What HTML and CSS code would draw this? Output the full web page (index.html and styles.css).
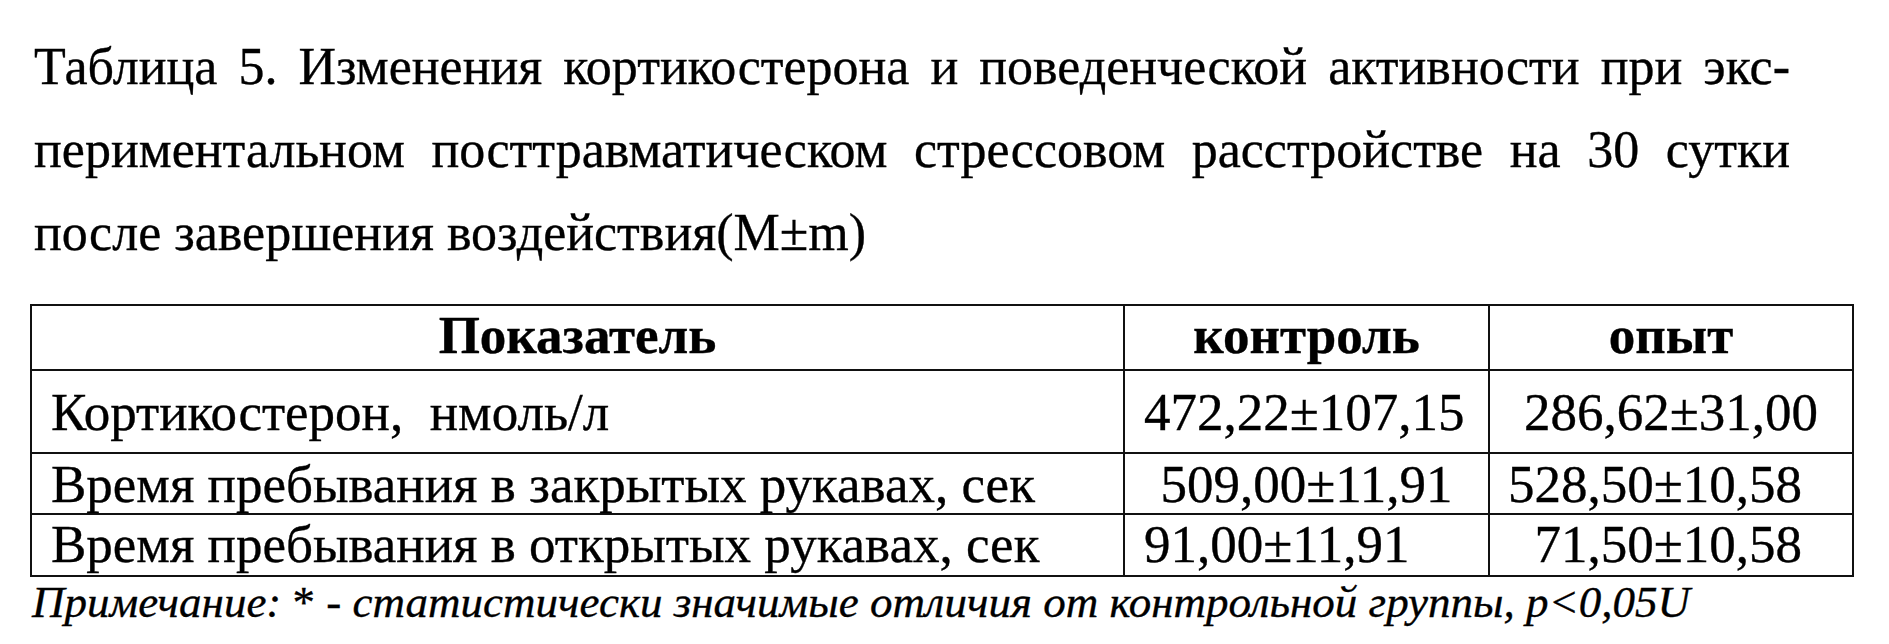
FILE: index.html
```html
<!DOCTYPE html>
<html lang="ru">
<head>
<meta charset="utf-8">
<title>Таблица 5</title>
<link rel="stylesheet" href="styles.css">
</head>
<body>
<div class="page">
  <div class="caption">
    <div class="line just">Таблица 5. Изменения кортикостерона и поведенческой активности при экс-</div>
    <div class="line just">периментальном посттравматическом стрессовом расстройстве на 30 сутки</div>
    <div class="line">после завершения воздействия(M±m)</div>
  </div>
  <table class="data">
    <colgroup>
      <col class="col-name">
      <col class="col-ctrl">
      <col class="col-exp">
    </colgroup>
    <tr class="r-head">
      <th>Показатель</th>
      <th>контроль</th>
      <th>опыт</th>
    </tr>
    <tr class="r-1">
      <td class="name">Кортикостерон,&nbsp; нмоль/л</td>
      <td class="left">472,22±107,15</td>
      <td class="center">286,62±31,00</td>
    </tr>
    <tr class="r-2">
      <td class="name">Время пребывания в закрытых рукавах, сек</td>
      <td class="center">509,00±11,91</td>
      <td class="right">528,50±10,58</td>
    </tr>
    <tr class="r-3">
      <td class="name">Время пребывания в открытых рукавах, сек</td>
      <td class="left">91,00±11,91</td>
      <td class="right">71,50±10,58</td>
    </tr>
  </table>
  <div class="note"><i>Примечание:</i> * <i>- статистически значимые отличия от контрольной группы, p&lt;0,05U</i></div>
</div>
</body>
</html>
```
FILE: styles.css
```css
html, body {
  margin: 0;
  padding: 0;
  background: #fff;
}
body {
  width: 1889px;
  height: 644px;
  overflow: hidden;
  color: #000;
  font-family: "Liberation Serif", "Times New Roman", serif;
  -webkit-text-stroke: 0.35px #000;
}
.page {
  padding: 25px 0 0 0;
}
.caption {
  margin-left: 34px;
  width: 1756px;
  font-size: 52px;
  line-height: 83px;
}
.line {
  white-space: nowrap;
}
.line.just {
  text-align: justify;
  text-align-last: justify;
  white-space: normal;
}
.data {
  margin-top: 30px;
  margin-left: 30px;
  border-collapse: collapse;
  table-layout: fixed;
  width: 1822px;
  font-size: 53px;
  line-height: 53px;
}
.col-name { width: 1093px; }
.col-ctrl { width: 365px; }
.col-exp { width: 364px; }
.data th,
.data td {
  border: 2px solid #111;
  padding: 0;
  vertical-align: top;
  white-space: nowrap;
}
.data th {
  font-weight: bold;
  text-align: center;
}
.r-head { height: 65px; }
.r-head th { padding-top: 3px; }
.r-1 { height: 83px; }
.r-1 td { padding-top: 15px; }
.r-2 { height: 61px; }
.r-2 td { padding-top: 4px; }
.r-3 { height: 62px; }
.r-3 td { padding-top: 3px; }
.data td.name { padding-left: 19px; text-align: left; }
.data td.left { padding-left: 19px; text-align: left; }
.data td.center { text-align: center; }
.data td.right { padding-right: 50px; text-align: right; }
.note {
  margin-left: 32px;
  margin-top: 1px;
  font-size: 45px;
  line-height: 48px;
}
```
